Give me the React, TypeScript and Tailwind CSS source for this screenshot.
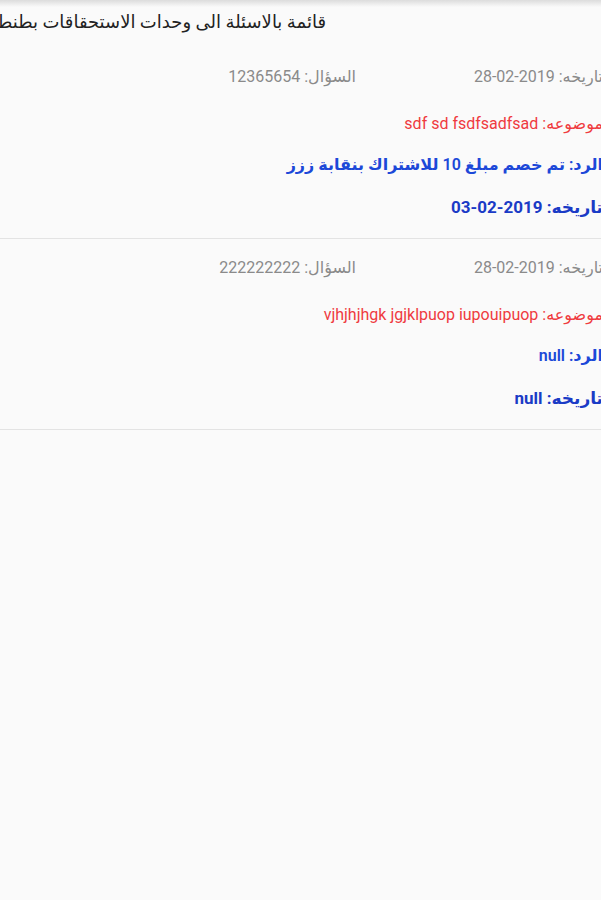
const FONT = "font-['Roboto','DejaVu_Sans',sans-serif]";

interface Question {
  date: string;
  id: string;
  subject: string;
  reply: string;
  replyDate: string;
}

const questions: Question[] = [
  {
    date: "28-02-2019",
    id: "12365654",
    subject: "sdf sd fsdfsadfsad",
    reply: "تم خصم مبلغ 10 للاشتراك بنقابة ززز",
    replyDate: "03-02-2019",
  },
  {
    date: "28-02-2019",
    id: "222222222",
    subject: "vjhjhjhgk jgjklpuop iupouipuop",
    reply: "null",
    replyDate: "null",
  },
];

function QuestionRow({ q }: { q: Question }) {
  return (
    <div className="border-b border-[#e3e3e3] pt-[18px] pb-[19px]" dir="rtl">
      <div className="flex h-[22px] items-center whitespace-nowrap text-[16px] leading-[22px] text-[#8a8a8a]">
        <div className="w-[247px] shrink-0">
          تاريخه: <span dir="ltr">{q.date}</span>
        </div>
        <div className="w-[120px] shrink-0 text-center">
          السؤال: <span dir="ltr">{q.id}</span>
        </div>
      </div>
      <div className="mt-[26px] whitespace-nowrap text-[16px] leading-[20px] text-[#ef3a3f]">
        موضوعه: <span dir="ltr">{q.subject}</span>
      </div>
      <div className="mt-[19px] whitespace-nowrap text-[16px] font-semibold leading-[24px] text-[#1c48d8]">
        الرد: {q.reply}
      </div>
      <div className="mt-[18px] whitespace-nowrap text-[17px] font-bold leading-[24px] text-[#1a3bc6]">
        تاريخه: <span dir="ltr">{q.replyDate}</span>
      </div>
    </div>
  );
}

export default function App() {
  return (
    <div className={`relative h-[900px] w-full overflow-hidden bg-[#fafafa] ${FONT}`}>
      <div className="h-[7px] bg-gradient-to-b from-[#dcdcdc] to-[#fafafa]" />
      <div className="flex h-[41px] justify-start" dir="ltr">
        <div
          className="w-[326px] shrink-0 overflow-visible whitespace-nowrap pt-[3px] text-[18px] leading-[24px] text-[#222]"
          dir="rtl"
        >
          قائمة بالاسئلة الى وحدات الاستحقاقات بطنطا
        </div>
      </div>
      <div className="mr-[-2px]">
        {questions.map((q) => (
          <QuestionRow key={q.id} q={q} />
        ))}
      </div>
    </div>
  );
}
